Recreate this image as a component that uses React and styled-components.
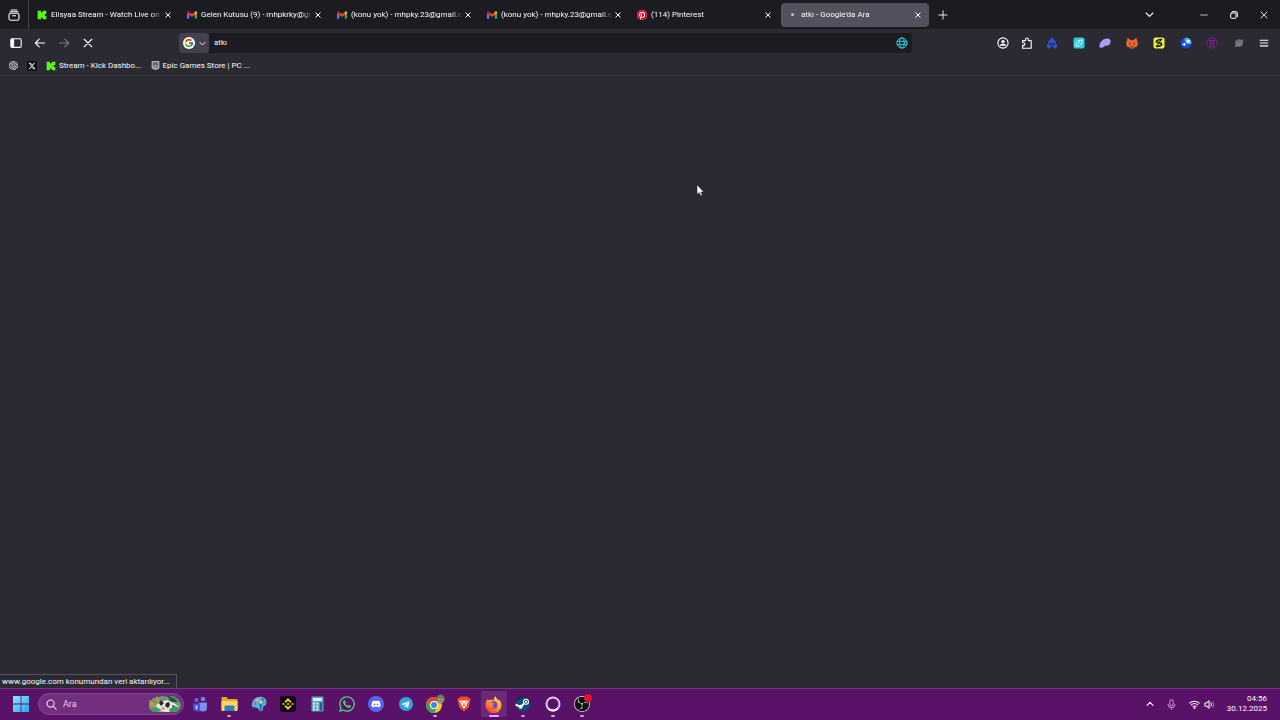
import styled, { createGlobalStyle } from "styled-components";
import { FaXTwitter } from "react-icons/fa6";
import { FaWhatsapp, FaDiscord, FaTelegramPlane } from "react-icons/fa";
import { SiOpenai, SiEpicgames, SiBinance, SiObsstudio, SiPinterest } from "react-icons/si";
import { FcGoogle } from "react-icons/fc";

const GlobalStyle = createGlobalStyle`
  * {
    box-sizing: border-box;
  }

  body {
    margin: 0;
    background: #2b2a33;
    color: #fbfbfe;
    font-family: Roboto, "Noto Sans", sans-serif;
    font-size: 8px;
    line-height: 12px;
  }

  button,
  input {
    padding: 0;
    border: 0;
    background: none;
    color: inherit;
    font: inherit;
    outline: none;
  }

  svg {
    display: block;
    flex: none;
  }
`;

const Tile = styled.span`
  position: relative;
  display: flex;
  align-items: center;
  justify-content: center;
  width: ${({ $size }) => $size || "16px"};
  height: ${({ $size }) => $size || "16px"};
  border-radius: ${({ $radius }) => $radius};
  background: ${({ $bg }) => $bg};
  color: ${({ $color }) => $color};
`;

/* ---------- icons ---------- */

function LineIcon({ size = 12, stroke = 1.1, color = "currentColor", children }) {
  return (
    <svg width={size} height={size} viewBox="0 0 12 12" fill="none" stroke={color} strokeWidth={stroke} strokeLinecap="round" strokeLinejoin="round">
      {children}
    </svg>
  );
}

const CloseIcon = ({ size = 6 }) => (
  <LineIcon size={size} stroke={size < 8 ? 2 : 1.3}>
    <path d="M1.5 1.5l9 9M10.5 1.5l-9 9" />
  </LineIcon>
);

const ChevronDown = ({ size = 8 }) => (
  <LineIcon size={size} stroke={1.5}>
    <path d="M1.5 4l4.5 4.5L10.5 4" />
  </LineIcon>
);

const RecentIcon = () => (
  <LineIcon>
    <path d="M3.2 1h5.6M2 2.8h8" />
    <rect x="1" y="4.2" width="10" height="7" rx="1.8" />
    <path d="M4.4 6.8h3.2" />
  </LineIcon>
);

const SidebarIcon = () => (
  <LineIcon>
    <rect x="0.8" y="1.8" width="10.4" height="8.6" rx="1.4" />
    <path d="M1.4 2.2h2.2v7.8H1.4z" fill="currentColor" />
  </LineIcon>
);

const ArrowLeft = () => (
  <LineIcon>
    <path d="M10.6 6H1.4M5.2 2.2L1.4 6l3.8 3.8" />
  </LineIcon>
);

const ArrowRight = () => (
  <LineIcon>
    <path d="M1.4 6h9.2M6.800 2.200L10.600 6l-3.800 3.800" />
  </LineIcon>
);

const GlobeIcon = () => (
  <LineIcon stroke={1} color="#2fd0d8">
    <circle cx="6" cy="6" r="5.1" />
    <ellipse cx="6" cy="6" rx="2.3" ry="5.1" />
    <path d="M1.4 4.3h9.2M1.4 7.7h9.2" />
  </LineIcon>
);

const AccountIcon = () => (
  <LineIcon>
    <circle cx="6" cy="6" r="5.1" />
    <circle cx="6" cy="4.6" r="1.7" fill="currentColor" stroke="none" />
    <path d="M2.900 8.700c0-1.500 1.300-2 3.100-2s3.100.5 3.100 2z" fill="currentColor" stroke="none" />
  </LineIcon>
);

const PuzzleIcon = () => (
  <LineIcon>
    <path d="M1.6 11.2V8.4h1a1.3 1.3 0 000-2.6h-1V3.6h3V2.4a1.4 1.4 0 012.8 0v1.2h2.8v7.6z" />
  </LineIcon>
);

const MenuIcon = () => (
  <LineIcon size={10} stroke={1.3}>
    <path d="M1.500 2.600h9M1.500 6h9M1.500 9.400h9" />
  </LineIcon>
);

const KickIcon = () => (
  <svg width="10" height="10" viewBox="0 0 15 15">
    <path d="M1 1h5v3h1V3h2V1h5v5h-2v1h-1v1h1v1h2v5H9v-2H7v-1H6v3H1z" fill="#53fc18" />
  </svg>
);

const GmailIcon = () => (
  <svg width="10" height="8" viewBox="0 0 20 15">
    <path d="M0 2v12q0 1 1 1h3.5V5z" fill="#4285f4" />
    <path d="M20 2v12q0 1-1 1h-3.5V5z" fill="#34a853" />
    <path d="M4.500 1.5v6L10 11.5l5.5-4v-6L10 5.5z" fill="#ea4335" />
    <path d="M0 2.5v2.2l4.5 3V1.5L3.2.5C1.8-.5 0 .6 0 2.5z" fill="#c5221f" />
    <path d="M20 2.5v2.2l-4.5 3V1.5l1.3-1c1.4-1 3.2.1 3.2 2z" fill="#fbbc04" />
  </svg>
);

const PinterestIcon = () => (
  <Tile $bg="#fff" $color="#e60023" $radius="50%" $size="10px">
    <SiPinterest size={10} />
  </Tile>
);

const HelmetIcon = () => (
  <svg width="12" height="12" viewBox="0 0 12 12">
    <path d="M6 .4c.8 0 1.200.9 1.100 1.700C9.300 2.700 10 4.500 10 6.500l1 1.500-.4 3.200H7.400L7 9H5l-.4 2.200H1.400L1 8l1-1.500c0-2 .7-3.800 2.900-4.400C4.800 1.300 5.200.4 6 .4z" fill="#3150c8" />
    <path d="M3.400 5.600l2 .9v1.400H3.800zM8.600 5.600l-2 .9v1.400h1.600z" fill="#15173f" />
  </svg>
);

const TealIcon = () => (
  <svg width="12" height="12" viewBox="0 0 12 12">
    <rect x=".5" y=".5" width="11" height="11" rx="2" fill="#35c9d8" />
    <path d="M3 8.8C2.200 5.800 4.600 3 9 3c.5 3.600-1.600 6.600-6 5.800z" fill="none" stroke="#eaffff" strokeWidth="1" />
    <path d="M5 7c.2-1 .8-1.700 2-2" fill="none" stroke="#eaffff" strokeWidth=".9" />
  </svg>
);

const BlobIcon = () => (
  <svg width="12" height="12" viewBox="0 0 12 12">
    <path d="M.4 9.400C.4 5.600 3.600 1.600 8 1.400c2.400-.1 4 1.300 3.700 3.300-.3 2.300-2.200 4.100-4.200 4.100-.6 0-1-.2-1.300-.6-.8 1.300-2 2.500-3.800 2.500C1.200 10.700.4 10.300.4 9.400z" fill="#ab9ff2" />
    <circle cx="7" cy="4.500" r=".5" fill="#8378c8" />
    <circle cx="9.500" cy="4.500" r=".5" fill="#8378c8" />
  </svg>
);

const FoxIcon = () => (
  <svg width="12" height="12" viewBox="0 0 12 12">
    <path d="M1.600.8l3 2.400h2.800l3-2.400.6 2.800 1 3-1.200 3.200-2.300.4-.9 1.300H4.400l-.9-1.300-2.300-.4L0 6.600l1-3z" fill="#ee6a2c" />
    <path d="M3.600 4.400l1 2.400-2.200.4zM8.400 4.400l-1 2.400 2.200.4z" fill="#b8431c" />
    <path d="M2.900 6.400l1.800.5-.5.800zM9.100 6.400l-1.800.5.500.8z" fill="#28222b" />
    <path d="M4.800 9.300h2.400l.2 1.300H4.600z" fill="#5b2c24" />
  </svg>
);

const YellowIcon = () => (
  <svg width="12" height="12" viewBox="0 0 12 12">
    <rect x=".5" y=".5" width="11" height="11" rx="2" fill="#eff23b" />
    <path d="M9.200 2.600C7 2.400 3.300 3 3.300 4.700c0 1.600 5.400.6 5.400 2.600 0 1.500-3.500 2.200-5.900 2" fill="none" stroke="#17170d" strokeWidth="1.600" />
    <path d="M7.800 3L4.200 9" stroke="#17170d" strokeWidth="1" />
  </svg>
);

const BlueIcon = () => (
  <svg width="12" height="12" viewBox="0 0 12 12">
    <circle cx="6" cy="6" r="5.500" fill="#1748d8" />
    <path d="M6 .5A5.500 5.500 0 0111.500 6L9.500 7.500 4 3z" fill="#43b7f5" />
    <path d="M5.800 4.700l2-1.900 2.200.4-.6 2.200-1.900 1.200zM2.200 7.400l2.500-1.600 1.300 1.400-1.500 1.700z" fill="#fff" />
  </svg>
);

const ArchIcon = () => (
  <LineIcon stroke={0.9} color="#8b1c9c">
    <circle cx="6" cy="6" r="5.200" strokeDasharray="2 1" />
    <path d="M3 3.500h6M4.300 3.500v6M7.700 3.500v6M6 4v4" />
  </LineIcon>
);

const GreyIcon = () => (
  <svg width="10" height="10" viewBox="0 0 12 12">
    <circle cx="6" cy="6" r="4.600" fill="#73727c" />
    <path d="M1 10c3.500-.5 8-3.500 10-8" stroke="#8f8e97" strokeWidth="1" fill="none" />
    <path d="M4 4.500l3.800-.8" stroke="#5b5a64" strokeWidth="1" />
  </svg>
);

const WindowsIcon = () => (
  <svg width="16" height="16" viewBox="0 0 16 16">
    <defs>
      <linearGradient id="win" x1="0" y1="0" x2="1" y2="1">
        <stop offset="0" stopColor="#8fe5ff" />
        <stop offset="1" stopColor="#2aa5ee" />
      </linearGradient>
    </defs>
    <path d="M0 0h7.600v7.600H0zM8.400 0H16v7.600H8.400zM0 8.400h7.600V16H0zM8.400 8.400H16V16H8.400z" fill="url(#win)" />
  </svg>
);

const SearchIcon = () => (
  <LineIcon size={11} stroke={1.2} color="#ead9ee">
    <circle cx="5" cy="5" r="3.900" />
    <path d="M8 8l3.200 3.200" />
  </LineIcon>
);

/* Daily artwork at the end of the search box */
const SearchArt = () => (
  <svg width="34" height="18" viewBox="0 0 34 18">
    <path d="M1 8l4-5 5-1 4-1 6 1 5-1 5 3 3 5-1 5-4 3H5l-4-4z" fill="#6b9a72" />
    <path d="M1 5l6 3 1 6-6-3zM8 1l5 5-5 2z" fill="#b09a52" />
    <path d="M19 1l7 2 4 4-7 0z" fill="#24563c" />
    <path d="M8 10l4-3 7-2 7 3 5 4-3 4-9 1-10-1z" fill="#e8e5dc" />
    <path d="M11 8l2-3 3 3-3 3zM18 8l3-1 1 3-2 3-3-2zM24 10l3 1-2 2z" fill="#28272b" />
    <path d="M2 15l6-3 6 3-5 2H5zM21 14l6-3 5 2-3 4h-7z" fill="#3f9d62" />
    <path d="M14 12l3 1-2 2z" fill="#c75b47" />
  </svg>
);

const TeamsIcon = () => (
  <svg width="16" height="16" viewBox="0 0 16 16">
    <circle cx="11" cy="3" r="2.300" fill="#6f80e8" />
    <circle cx="4.500" cy="4" r="2" fill="#5b6be0" />
    <path d="M7 6.500h8v5c0 2.500-1.500 4-4 4s-4-1.500-4-4z" fill="#7b8cf2" />
    <path d="M1 7.500h7v7.800H4.500C2.300 15.300 1 14 1 12z" fill="#4554d6" />
    <path d="M4.500 9.500v3.500" stroke="#e3e7ff" strokeWidth="1.500" />
  </svg>
);

const FolderIcon = () => (
  <svg width="17" height="16" viewBox="0 0 17 16">
    <path d="M.5 2q0-1 1-1h4l1.500 2h8.500q1 0 1 1v10h-16z" fill="#e5a823" />
    <path d="M.5 5h16v9q0 1-1 1h-14q-1 0-1-1z" fill="#ffd660" />
    <path d="M3.500 10.500q0-1 1-1h8q1 0 1 1V15h-10z" fill="#2a82b8" />
  </svg>
);

const PaintIcon = () => (
  <svg width="16" height="16" viewBox="0 0 16 16">
    <path d="M.8 9C.8 4.200 4.500.8 9 .8c4 0 6.500 2.400 6.500 5.600 0 2-1 3-2.500 3.600-1.200.5-1 1.600-1 2.800 0 1.500-1 2.400-2.500 2.400-1.600 0-1.600-2.400-3.200-3.200C4.500 11 1 12.500.8 9z" fill="#4fb8dc" />
    <path d="M8.500 6l2.500.5-.5 9-2-1z" fill="#2f6fb5" />
    <path d="M9 4.500l2 .3v3l-2.300-.4z" fill="#e6d9c9" />
    <circle cx="4" cy="7.500" r="1.400" fill="#dc5c62" />
    <circle cx="6.600" cy="4" r="1.400" fill="#f2bc49" />
    <circle cx="11.500" cy="3.600" r="1.300" fill="#7658c0" />
    <circle cx="13" cy="7" r="1.300" fill="#4faa56" />
  </svg>
);

const CalcIcon = () => (
  <svg width="13" height="16" viewBox="0 0 13 16">
    <rect x=".5" y=".5" width="12" height="15" rx="1" fill="#5aa5bd" />
    <rect x="2" y="2" width="9" height="3" fill="#d7f2f6" />
    <path d="M2 6.500h2v2H2zM5.300 6.500h2v2h-2zM2 9.500h2v2H2zM5.300 9.500h2v2h-2zM2 12.500h2v2H2zM5.300 12.500h2v2h-2z" fill="#d9eef1" />
    <path d="M8.800 6.500h2.400v8H8.800z" fill="#205e88" />
  </svg>
);

const ChromeIcon = () => (
  <svg width="20" height="20" viewBox="0 0 20 20">
    <circle cx="9" cy="11" r="8" fill="#f4c62a" />
    <path d="M2.100 7a8 8 0 0113.800 0H9a4 4 0 00-3.500 6z" fill="#e84435" />
    <path d="M2.100 7A8 8 0 009 19l3.500-6a4 4 0 01-7 0z" fill="#2fa550" />
    <circle cx="9" cy="11" r="4" fill="#fff" />
    <circle cx="9" cy="11" r="3" fill="#3e7fe8" />
    <circle cx="15.500" cy="5" r="4.400" fill="#77705f" />
    <path d="M12.500 4.500c1-2 4.500-2.500 6 0l-1.500 4h-3z" fill="#b3a587" />
    <path d="M13 4h5M14.500 6.500h2" stroke="#544b3d" strokeWidth="1" />
  </svg>
);

const BraveIcon = () => (
  <svg width="14" height="16" viewBox="0 0 14 16">
    <path d="M3.500.5h7l1.200 1.400 1.300.2.600 2-.5 1-1.300 6.200L7 15.500l-4.800-4.200L.9 5.100l-.5-1 .6-2 1.300-.2z" fill="#f24a2b" />
    <path d="M3 4.500l2.500.2L7 4.200l1.500.5 2.500-.2.300 1.500-1.800 2.200.3 1.400L7 12.500 4.200 9.600l.3-1.400L2.700 6z" fill="#fff" />
    <path d="M4 6l1.800.6M10 6l-1.800.6M7 7v2.400M5.300 10L7 9.300l1.700.7" stroke="#f24a2b" strokeWidth=".9" fill="none" />
  </svg>
);

const FirefoxIcon = () => (
  <svg width="17" height="17" viewBox="0 0 17 17">
    <defs>
      <linearGradient id="fx" x1=".9" y1="0" x2=".2" y2="1">
        <stop offset="0" stopColor="#ffe14a" />
        <stop offset=".5" stopColor="#ff9a2e" />
        <stop offset="1" stopColor="#f5304e" />
      </linearGradient>
    </defs>
    <path d="M2.300 3.200C2.600 4 3 4.200 3.700 4.200 4.600 3.500 5.500 3.300 6.200 3.400L9 4.500C8.600 2.500 9.400 1.200 10.700.3c.3 2 1.500 2.700 2.800 4.100.2-.3.200-.6.100-1.100 1.700 1.600 2.900 3.600 2.900 6A8 8 0 01.5 9.300c0-2.400.8-4.400 1.800-6.100z" fill="url(#fx)" />
    <circle cx="8.600" cy="9" r="3.800" fill="#7541c9" />
    <path d="M3.200 6.500c1.500-.7 3-.4 4.300.6l2.200.3c-.3 1-1.500 1.200-2.400 1.400-.2 1.400 1 2.300 2.600 2.100-1.600 1.500-4.400 1.100-5.500-.9z" fill="#ff8a2b" />
  </svg>
);

const SteamIcon = () => (
  <svg width="16" height="16" viewBox="0 0 16 16">
    <circle cx="8" cy="8" r="7.600" fill="#134a7c" />
    <path d="M.8 5.500A7.600 7.600 0 0115.600 8L13 2.500 8 .5z" fill="#101e3f" />
    <path d="M.6 8.600l5.200 2.200 3.400-3.500.2-2.600" stroke="#fff" strokeWidth="1.900" fill="none" />
    <circle cx="11" cy="5.800" r="2.500" fill="#134a7c" stroke="#fff" strokeWidth="1.100" />
    <circle cx="11" cy="5.800" r="1.100" fill="#fff" />
    <circle cx="5.600" cy="10.800" r="2" fill="#fff" />
  </svg>
);

const RingIcon = () => (
  <svg width="16" height="16" viewBox="0 0 16 16">
    <circle cx="8" cy="8" r="6.500" fill="none" stroke="#d9caf6" strokeWidth="2" />
    <path d="M3.400 12.600a6.500 6.500 0 009.200 0" fill="none" stroke="#fff" strokeWidth="2" />
  </svg>
);

const WifiIcon = () => (
  <LineIcon size={11}>
    <path d="M.8 4.600c3-2.900 7.400-2.900 10.400 0M2.600 6.500c2-1.900 4.800-1.900 6.800 0M4.400 8.300c1-.9 2.200-.9 3.200 0" />
    <circle cx="6" cy="9.800" r=".5" fill="currentColor" />
  </LineIcon>
);

const VolumeIcon = () => (
  <LineIcon size={11}>
    <path d="M1 4.300h1.800L5.500 2v8L2.800 7.700H1zM7.500 4.200c.9 1 .9 2.600 0 3.600" />
    <path d="M9.300 2.800c1.700 1.800 1.700 4.600 0 6.400" opacity=".4" />
  </LineIcon>
);

const MicIcon = () => (
  <LineIcon size={11} color="#c493ce">
    <rect x="4.200" y=".8" width="3.600" height="6.600" rx="1.800" />
    <path d="M2.300 5.800c0 4.600 7.400 4.600 7.400 0M6 9.300v2" />
  </LineIcon>
);

/* ---------- page ---------- */

export default function App() {
  const tabs = [
    { title: "Elisyaa Stream - Watch Live on I", icon: <KickIcon /> },
    { title: "Gelen Kutusu (9) - mhpkrky@gr", icon: <GmailIcon /> },
    { title: "(konu yok) - mhpky.23@gmail.c", icon: <GmailIcon /> },
    { title: "(konu yok) - mhpky.23@gmail.c", icon: <GmailIcon /> },
    { title: "(114) Pinterest", icon: <PinterestIcon /> },
    { title: "atkı - Google'da Ara", icon: <Dot />, active: true },
  ];

  const extensions = [
    ["Helmet", HelmetIcon],
    ["Leaf", TealIcon],
    ["Phantom", BlobIcon],
    ["Fox", FoxIcon],
    ["Solid", YellowIcon],
    ["Globe", BlueIcon],
    ["Arch", ArchIcon],
    ["Planet", GreyIcon],
  ];

  const apps = [
    { name: "Teams", icon: <TeamsIcon /> },
    { name: "Dosya Gezgini", icon: <FolderIcon />, running: true },
    { name: "Paint", icon: <PaintIcon /> },
    {
      name: "Binance",
      icon: (
        <Tile $bg="#0d0c10" $color="#f0c64e" $radius="3px">
          <SiBinance size={12} />
        </Tile>
      ),
    },
    { name: "Hesap Makinesi", icon: <CalcIcon /> },
    { name: "WhatsApp", icon: <FaWhatsapp size={18} color="#50d273" /> },
    {
      name: "Discord",
      icon: (
        <Tile $bg="#5865f2" $color="#fff" $radius="50%">
          <FaDiscord size={10} />
        </Tile>
      ),
    },
    {
      name: "Telegram",
      icon: (
        <Tile $bg="#2da5dc" $color="#fff" $radius="50%" $size="14px">
          <FaTelegramPlane size={9} />
        </Tile>
      ),
    },
    { name: "Chrome", icon: <ChromeIcon />, running: true },
    { name: "Brave", icon: <BraveIcon /> },
    { name: "Firefox", icon: <FirefoxIcon />, running: true, focused: true },
    { name: "Steam", icon: <SteamIcon />, running: true },
    { name: "Halka", icon: <RingIcon />, running: true },
    {
      name: "OBS Studio",
      icon: (
        <Tile $bg="#111014" $color="#e9e7ec" $radius="50%">
          <SiObsstudio size={16} />
          <RecordBadge />
        </Tile>
      ),
      running: true,
    },
  ];

  return (
    <Page>
      <GlobalStyle />
      <TabBar>
        <ViewButton aria-label="Son gezinmeler">
          <RecentIcon />
        </ViewButton>
        <TabList role="tablist">
          {tabs.map((tab, i) => (
            <Tab key={i} $active={tab.active}>
              <TabButton role="tab" aria-selected={!!tab.active}>
                <Favicon>{tab.icon}</Favicon>
                <TabTitle>{tab.title}</TabTitle>
              </TabButton>
              <TabClose aria-label="Sekmeyi kapat">
                <CloseIcon />
              </TabClose>
            </Tab>
          ))}
          <ToolButton aria-label="Yeni sekme">
            <LineIcon size={10}>
              <path d="M6 1v10M1 6h10" />
            </LineIcon>
          </ToolButton>
        </TabList>
        <ListButton aria-label="Tüm sekmeler">
          <ChevronDown size={9} />
        </ListButton>
        <WindowButton aria-label="Simge durumuna küçült">
          <LineIcon size={8}>
            <path d="M1 6h10" />
          </LineIcon>
        </WindowButton>
        <WindowButton aria-label="Önceki boyut">
          <LineIcon size={8} stroke={1.5}>
            <rect x="1" y="3" width="8" height="8" rx="1.5" />
            <path d="M3.500 1H9q2 0 2 2v5.500" />
          </LineIcon>
        </WindowButton>
        <WindowButton aria-label="Kapat">
          <CloseIcon size={8} />
        </WindowButton>
      </TabBar>

      <Toolbar>
        <ToolButton aria-label="Kenar çubuğu">
          <SidebarIcon />
        </ToolButton>
        <ToolButton aria-label="Geri">
          <ArrowLeft />
        </ToolButton>
        <ToolButton aria-label="İleri" disabled>
          <ArrowRight />
        </ToolButton>
        <ToolButton aria-label="Durdur">
          <CloseIcon size={10} />
        </ToolButton>
        <UrlBar>
          <EngineButton aria-label="Arama motoru">
            <EngineLogo>
              <FcGoogle size={10} />
            </EngineLogo>
            <ChevronDown size={7} />
          </EngineButton>
          <UrlInput aria-label="Adres" defaultValue="atkı" />
          <PageAction aria-label="Çevir">
            <GlobeIcon />
          </PageAction>
        </UrlBar>
        <ToolButton aria-label="Hesap">
          <AccountIcon />
        </ToolButton>
        <ToolButton aria-label="Uzantılar">
          <PuzzleIcon />
        </ToolButton>
        <Extensions>
          {extensions.map(([name, Icon]) => (
            <ExtensionButton key={name} aria-label={name}>
              <Icon />
            </ExtensionButton>
          ))}
        </Extensions>
        <ToolButton aria-label="Menü">
          <MenuIcon />
        </ToolButton>
      </Toolbar>

      <Bookmarks>
        <Bookmark href="#" aria-label="ChatGPT">
          <SiOpenai size={9} />
        </Bookmark>
        <Bookmark href="#" aria-label="X">
          <Tile $bg="#0b0a0d" $color="#fff" $radius="1px" $size="10px">
            <FaXTwitter size={8} />
          </Tile>
        </Bookmark>
        <Bookmark href="#">
          <KickIcon />
          Stream - Kick Dashbo...
        </Bookmark>
        <Bookmark href="#">
          <SiEpicgames size={9} color="#b9b8bf" />
          Epic Games Store | PC ...
        </Bookmark>
      </Bookmarks>

      <Content>
        <Pointer>
          <svg width="9" height="13" viewBox="0 0 9 13">
            <path d="M1 .8v9.700l2.200-2 1.400 3.300 1.700-.7-1.400-3.200h3z" fill="#fff" stroke="#17161c" strokeWidth=".5" />
          </svg>
        </Pointer>
        <Status>www.google.com konumundan veri aktarılıyor...</Status>
      </Content>

      <Taskbar>
        <StartButton aria-label="Başlat">
          <WindowsIcon />
        </StartButton>
        <SearchBox>
          <SearchIcon />
          <SearchInput aria-label="Ara" placeholder="Ara" />
          <SearchArt />
        </SearchBox>
        <Apps>
          {apps.map((app) => (
            <AppButton key={app.name} aria-label={app.name} $focused={app.focused}>
              {app.icon}
              {app.running && <Running $focused={app.focused} />}
            </AppButton>
          ))}
        </Apps>
        <Tray>
          <LineIcon size={8} stroke={1.6}>
            <path d="M1.500 8L6 3.500 10.500 8" />
          </LineIcon>
          <MicIcon />
          <TrayGroup>
            <WifiIcon />
            <VolumeIcon />
          </TrayGroup>
          <Clock>
            <time>04:56</time>
            <time>30.12.2025</time>
          </Clock>
        </Tray>
      </Taskbar>
    </Page>
  );
}

const Page = styled.div`
  display: flex;
  flex-direction: column;
  min-height: 100vh;
`;

const TabBar = styled.header`
  display: flex;
  align-items: center;
  height: 29px;
  padding-right: 1px;
  background: #1c1b22;
`;

const ViewButton = styled.button`
  display: flex;
  align-items: center;
  justify-content: center;
  width: 29px;
  height: 29px;
  border-right: 1px solid #45444d;
`;

const TabList = styled.div`
  display: flex;
  flex: 1;
  align-items: center;
  gap: 2px;
  min-width: 0;
  padding-left: 2px;
`;

const Tab = styled.div`
  display: flex;
  align-items: center;
  flex: 0 1 148px;
  min-width: 0;
  height: 24px;
  padding: 0 6px;
  border-radius: 4px;
  background: ${({ $active }) => ($active ? "#52515e" : "transparent")};
`;

const TabButton = styled.button`
  display: flex;
  align-items: center;
  flex: 1;
  gap: 4px;
  min-width: 0;
  height: 24px;
  text-align: left;
`;

const Favicon = styled.span`
  display: flex;
  align-items: center;
  justify-content: center;
  width: 10px;
  height: 10px;
`;

const TabTitle = styled.span`
  flex: 1;
  overflow: hidden;
  white-space: nowrap;
  mask-image: linear-gradient(to left, transparent, #000 12px);
`;

const TabClose = styled.button`
  display: flex;
  align-items: center;
  justify-content: center;
  width: 10px;
  height: 16px;
`;

const Dot = styled.span`
  width: 3px;
  height: 3px;
  border-radius: 50%;
  background: #c3c2ca;
`;

const ToolButton = styled.button`
  display: flex;
  align-items: center;
  justify-content: center;
  flex: none;
  width: 24px;
  height: 20px;

  &:disabled {
    color: #77767f;
  }
`;

const ListButton = styled(ToolButton)`
  margin-right: 28px;
`;

const WindowButton = styled(ToolButton)`
  width: 30px;
`;

const Toolbar = styled.nav`
  display: flex;
  align-items: center;
  height: 28px;
  padding: 0 4px;
`;

const UrlBar = styled.div`
  display: flex;
  align-items: center;
  flex: 1;
  height: 20px;
  margin: 0 79px;
  border-radius: 3px;
  background: #1c1b22;
`;

const EngineButton = styled.button`
  display: flex;
  align-items: center;
  justify-content: center;
  gap: 4px;
  width: 30px;
  height: 20px;
  border-radius: 3px;
  background: #42414d;
`;

const EngineLogo = styled.span`
  display: flex;
  padding: 1px;
  border-radius: 50%;
  background: #fff;
`;

const UrlInput = styled.input`
  flex: 1;
  min-width: 0;
  padding-left: 5px;
`;

const PageAction = styled(ToolButton)`
  width: 20px;
`;

const Extensions = styled.div`
  display: flex;
  justify-content: space-between;
  width: 207px;
  margin: 0 3px;
`;

const ExtensionButton = styled(ToolButton)`
  width: 20px;
`;

const Bookmarks = styled.div`
  display: flex;
  align-items: center;
  gap: 9px;
  height: 19px;
  padding: 0 9px 1px;
  border-bottom: 1px solid #35343d;
`;

const Bookmark = styled.a`
  display: flex;
  align-items: center;
  gap: 3px;
  color: inherit;
  text-decoration: none;
`;

const Content = styled.main`
  position: relative;
  flex: 1;
`;

const Pointer = styled.div`
  position: absolute;
  top: 108px;
  left: 696px;
`;

const Status = styled.div`
  position: absolute;
  bottom: 0;
  left: 0;
  padding: 1px 6px 0 2px;
  border: 1px solid #56555e;
  border-width: 1px 1px 0 0;
  background: #2b2a33;
  white-space: nowrap;
`;

const Taskbar = styled.footer`
  display: flex;
  align-items: center;
  height: 32px;
  padding: 0 13px 0 10px;
  background: #5a1268;
  box-shadow: inset 0 1px #6d3a78;
`;

const StartButton = styled.button`
  display: flex;
  align-items: center;
  justify-content: center;
  width: 22px;
  height: 24px;
  margin-right: 6px;
`;

const SearchBox = styled.label`
  display: flex;
  align-items: center;
  gap: 6px;
  width: 146px;
  height: 22px;
  padding: 0 1px 0 7px;
  border: 1px solid #84478f;
  border-radius: 11px;
  background: #722f7e;
`;

const SearchInput = styled.input`
  flex: 1;
  min-width: 0;
  font-size: 9px;

  &::placeholder {
    color: #e3cfe8;
    opacity: 1;
  }
`;

const Apps = styled.div`
  display: flex;
  justify-content: space-between;
  width: 408px;
  margin-left: 3px;
`;

const AppButton = styled.button`
  position: relative;
  display: flex;
  align-items: center;
  justify-content: center;
  width: 26px;
  height: 26px;
  border-radius: 3px;
  background: ${({ $focused }) => ($focused ? "#6a2a78" : "transparent")};
`;

const Running = styled.span`
  position: absolute;
  bottom: 0;
  left: 50%;
  width: ${({ $focused }) => ($focused ? "10px" : "4px")};
  height: 2px;
  border-radius: 1px;
  background: ${({ $focused }) => ($focused ? "#e6a8ee" : "#c9a5d0")};
  transform: translateX(-50%);
`;

const RecordBadge = styled.span`
  position: absolute;
  top: -2px;
  right: -2px;
  width: 8px;
  height: 8px;
  border-radius: 50%;
  background: #e3122a;
`;

const Tray = styled.div`
  display: flex;
  align-items: center;
  gap: 12px;
  margin-left: auto;
`;

const TrayGroup = styled.div`
  display: flex;
  gap: 4px;
`;

const Clock = styled.div`
  display: flex;
  flex-direction: column;
  line-height: 10px;
  text-align: right;
`;
